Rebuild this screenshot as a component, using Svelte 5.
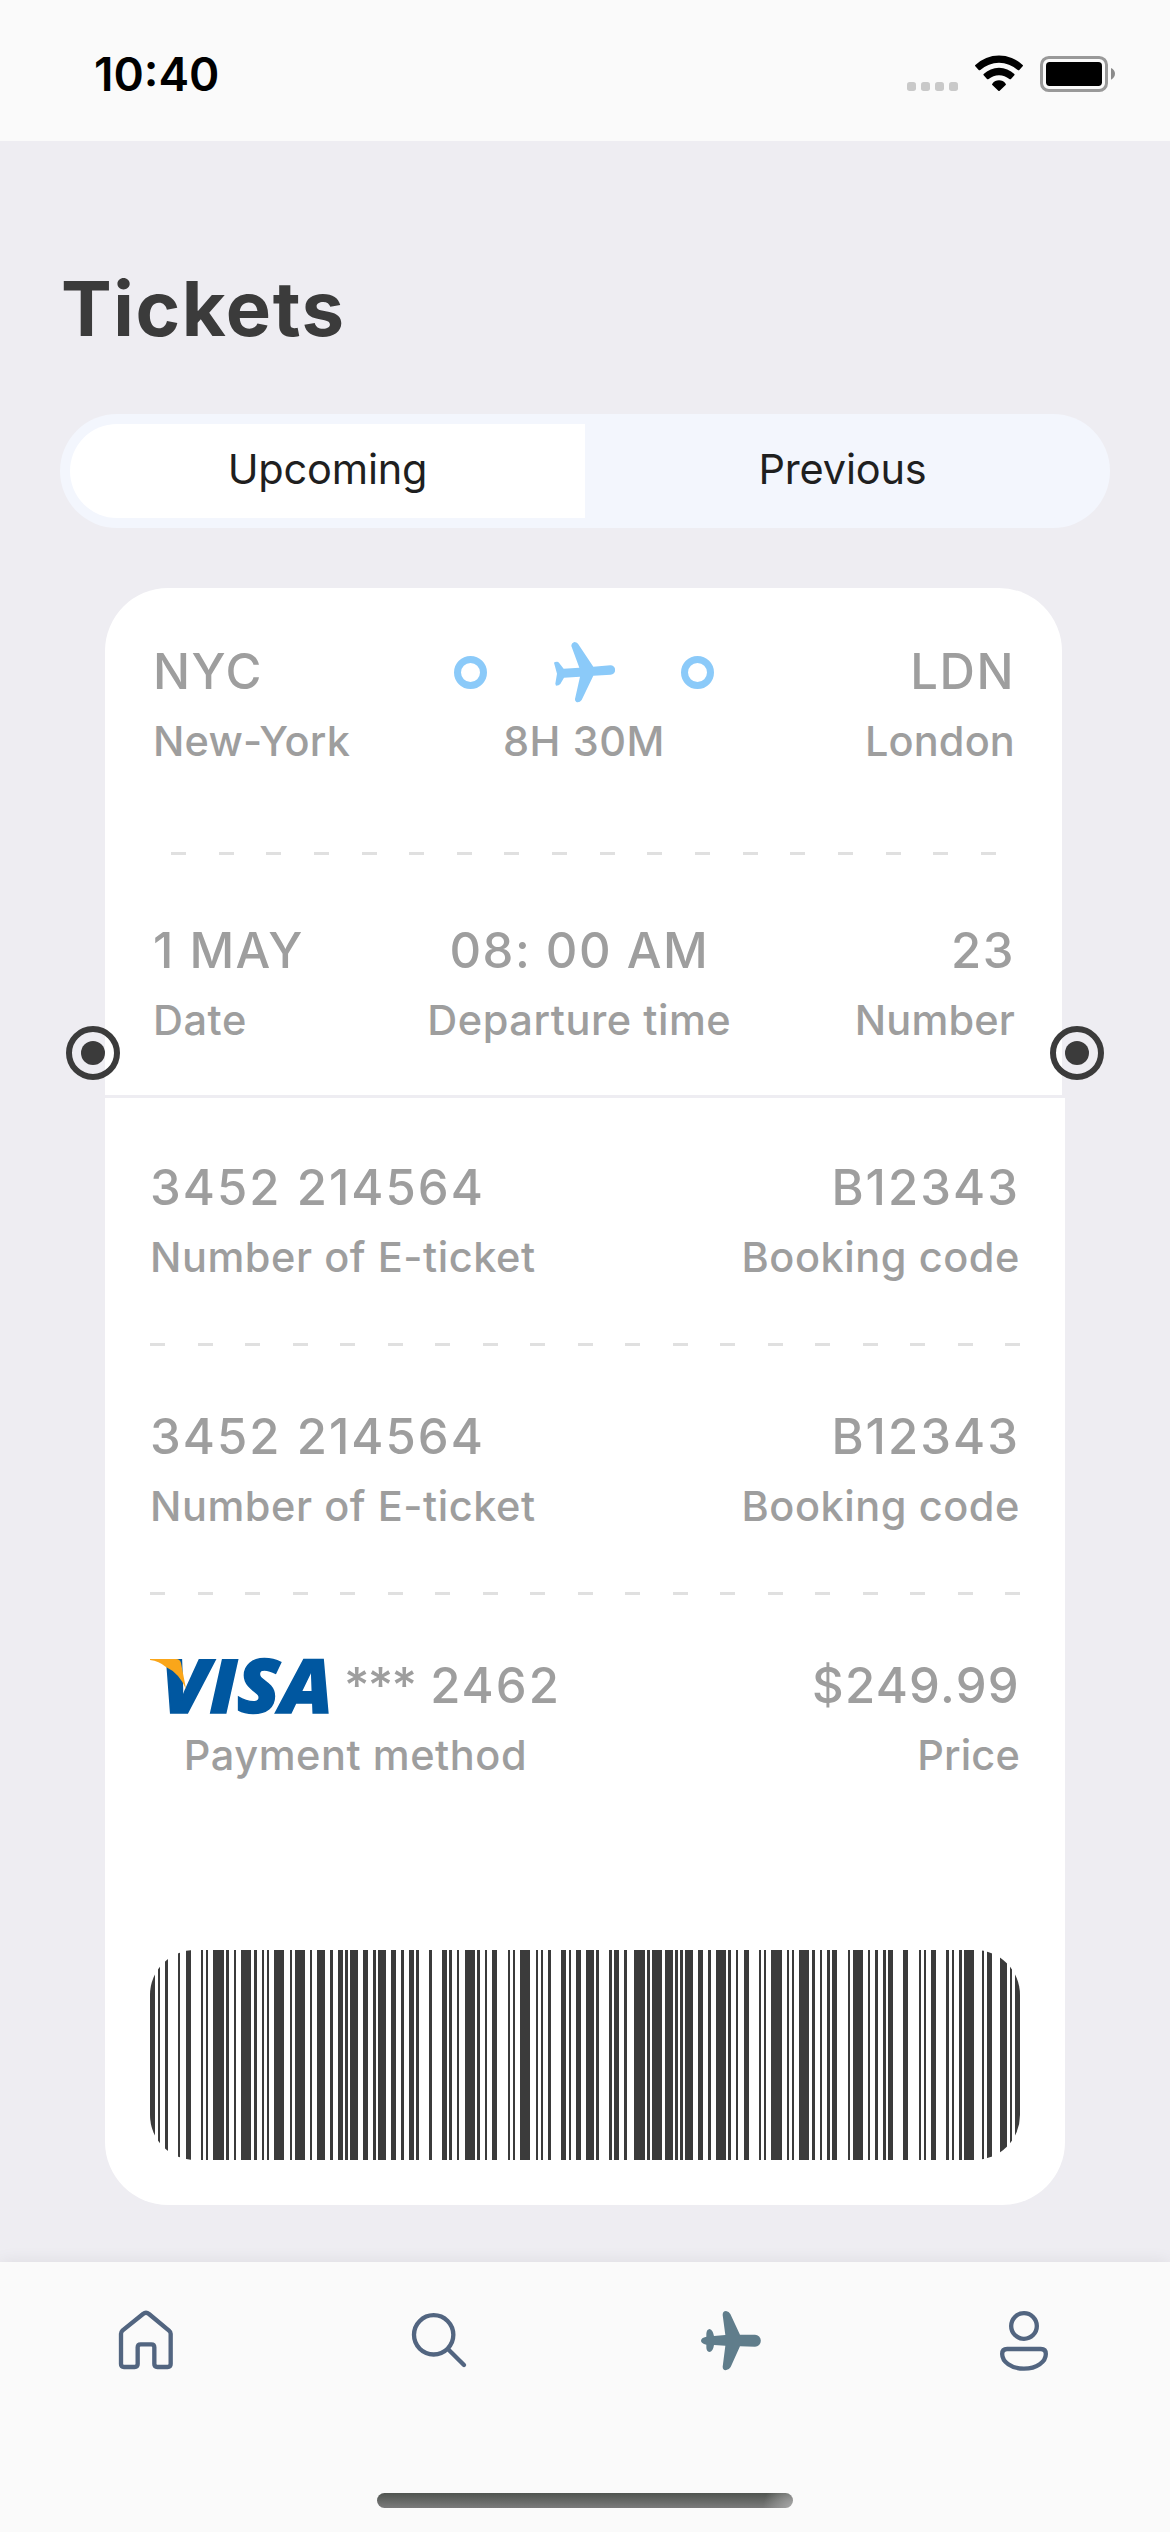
<script>
  let tab = $state('Upcoming');
  const tabs = ['Upcoming', 'Previous'];

  const tickets = [
    { number: '3452 214564', code: 'B12343' },
    { number: '3452 214564', code: 'B12343' }
  ];

  // [start, end] of every barcode stripe
  const bars = [
    [0,5],[8,10],[15,18],[28,30],[36,41],[51,53],[56,58],[63,74],[76,79],[84,86],[91,101],[104,107],
    [112,114],[117,119],[124,134],[140,142],[145,155],[160,162],[167,175],[180,183],[188,193],[195,198],
    [200,208],[213,218],[223,226],[228,236],[241,246],[251,254],[259,264],[266,269],[279,282],[292,297],
    [299,302],[307,309],[315,325],[327,330],[335,337],[342,347],[358,360],[363,365],[370,380],[386,388],
    [391,393],[398,401],[411,416],[419,421],[426,431],[436,444],[446,449],[459,462],[464,469],[474,477],
    [484,495],[497,500],[502,512],[515,523],[525,528],[530,533],[535,543],[548,553],[558,561],[566,576],
    [578,581],[586,588],[594,599],[609,611],[614,616],[621,632],[637,639],[642,644],[649,659],[662,665],
    [670,672],[677,680],[682,687],[698,700],[703,713],[718,720],[725,728],[733,736],[738,743],[753,758],
    [769,771],[774,776],[781,786],[796,799],[802,804],[809,812],[814,824],[832,834],[837,842],[850,857],
    [860,862],[865,870]
  ];
</script>

{#snippet dashes(count)}
  <div class="dashes">
    {#each Array(count) as _}<i></i>{/each}
  </div>
{/snippet}

<div class="screen">
  <header class="status">
    <span class="time">10:40</span>
    <div class="status-icons">
      <svg width="51" height="39" viewBox="81 72 153 117" fill="#c9c9c9">
        <rect x="81" y="156" width="27" height="27" rx="8" />
        <rect x="123" y="156" width="27" height="27" rx="8" />
        <rect x="165" y="156" width="27" height="27" rx="8" />
        <rect x="207" y="156" width="27" height="27" rx="8" />
      </svg>
      <svg width="48" height="39" viewBox="285 72 144 117">
        <path d="M286 105A103 103 0 0 1 428 105Q430 107 428 109L418 120Q416 122 413 120A84 84 0 0 0 301 120Q298 122 296 120L286 109Q284 107 286 105Z" />
        <path d="M311 132A66 66 0 0 1 403 132Q405 134 403 136L393 147Q391 149 388 147A48 48 0 0 0 326 147Q323 149 321 147L311 136Q309 134 311 132Z" />
        <path d="M337 161Q345 151 357 151Q369 151 377 161Q379 163 377 165L359 182Q357 184 355 182L337 165Q335 163 337 161Z" />
      </svg>
      <svg width="75" height="39" viewBox="480 72 225 117">
        <rect x="484.5" y="82.5" width="195" height="99" rx="22" fill="none" stroke="#999" stroke-width="9" />
        <rect x="498" y="96" width="168" height="72" rx="11" />
        <path d="M693 114Q705 120 705 131.500Q705 143 693 149Z" fill="#8b8b8b" />
      </svg>
    </div>
  </header>

  <main>
    <h1>Tickets</h1>

    <div class="tabs">
      {#each tabs as name}
        <button class:active={tab === name} onclick={() => (tab = name)}>{name}</button>
      {/each}
    </div>

    <div class="ticket">
      <section class="top">
        <div class="row route">
          <div class="cell">
            <b>NYC</b>
            <span class="tight">New-York</span>
          </div>
          <div class="cell mid">
            <div class="path">
              <i class="ring"></i>
              <svg width="62.667" height="62.667" viewBox="396 64 188 188" fill="#8bcaf9">
                <path d="M517 141L568 137A14 14 0 0 1 569 165L517 168L482 241Q475 250 466 247Q461 243 462 238L477 171L429 174L418 193Q414 198 405 198L403 192L408 162L399 129Q401 126 408 126Q412 126 414 129L428 147L475 144L451 79Q451 70 460 67Q467 67 471 72Z" />
              </svg>
              <i class="ring"></i>
            </div>
            <span>8H 30M</span>
          </div>
          <div class="cell end">
            <b>LDN</b>
            <span class="tight">London</span>
          </div>
        </div>
        {@render dashes(18)}
        <div class="row">
          <div class="cell">
            <b>1 MAY</b>
            <span>Date</span>
          </div>
          <div class="cell mid">
            <b>08: 00 AM</b>
            <span>Departure time</span>
          </div>
          <div class="cell end">
            <b>23</b>
            <span class="tight">Number</span>
          </div>
        </div>
        {#each ['left', 'right'] as side}
          <svg class="notch {side}" width="54" height="54" viewBox="0 0 54 54">
            <circle cx="27" cy="27" r="24" fill="none" stroke="#3b3b3b" stroke-width="6" />
            <circle cx="27" cy="27" r="12" fill="#3b3b3b" />
          </svg>
        {/each}
      </section>

      <section class="bottom">
        {#each tickets as t}
          <div class="row">
            <div class="cell">
              <b class="wide">{t.number}</b>
              <span>Number of E-ticket</span>
            </div>
            <div class="cell end">
              <b class="wide">{t.code}</b>
              <span>Booking code</span>
            </div>
          </div>
          {@render dashes(19)}
        {/each}
        <div class="row">
          <div class="cell mid">
            <div class="card-number">
              <svg class="visa" width="182" height="60" viewBox="0 0 182 60">
                <text x="11" y="56.5" textLength="172" lengthAdjust="spacingAndGlyphs">VISA</text>
                <path d="M0 3H26Q30 3 31 7L36 33Q29 17 16 11Q9 5 0 4Z" />
              </svg>
              <b class="stars">***</b>
              <b class="wide">2462</b>
            </div>
            <span>Payment method</span>
          </div>
          <div class="cell end">
            <b class="price">$249.99</b>
            <span class="tight">Price</span>
          </div>
        </div>
        <svg class="barcode" width="870" height="210" viewBox="0 0 870 210" shape-rendering="crispEdges">
          {#each bars as [a, z]}
            <rect x={a} y="0" width={z - a} height="210" fill="#3b3b3b" />
          {/each}
        </svg>
      </section>
    </div>
  </main>

  <nav>
    <div class="items">
      <svg width="66" height="66" viewBox="40 51 198 198">
        <path d="M64 131Q64 126 68 122L130 72Q139 65 148 72L208 122Q213 126 213 131V222Q213 231 204 231H173Q164 231 164 222V172Q164 163 155 163H123Q114 163 114 172V222Q114 231 105 231H73Q64 231 64 222Z" />
      </svg>
      <svg width="66" height="66" viewBox="915 51 198 198">
        <circle cx="998" cy="134.500" r="59" />
        <path d="M1043 179L1089 225" />
      </svg>
      <svg class="solid" width="66" height="66" viewBox="25 51 198 198">
        <path d="M151 134L196 134A17.500 18 0 0 1 196 170L151 169L123 231Q118 240 108 241Q99 240 99 230L107 167L73 165Q70 185 59 186Q50 184 50 172V164Q34 160 34 152Q34 143 50 140V131Q51 118 60 117Q69 119 73 138L107 135L99 75Q99 63 109 63Q118 64 122 72Z" />
      </svg>
      <svg width="66" height="66" viewBox="902.500 51 198 198">
        <circle cx="1001.500" cy="108" r="38.500" />
        <path d="M951 177H1052Q1067 177 1067 192C1067 215 1040 236 1001.500 236C963 236 936 215 936 192Q936 177 951 177Z" />
      </svg>
    </div>
    <div class="home-bar"></div>
  </nav>
</div>

<style>
  :global(body) {
    margin: 0;
    background: #eeedf2;
  }
  .screen {
    width: 1170px;
    height: 2532px;
    display: flex;
    flex-direction: column;
    overflow: hidden;
    background: #eeedf2;
    font-family: Inter, 'Liberation Sans', sans-serif;
  }
  svg {
    display: block;
    flex: none;
  }
  .status {
    box-sizing: border-box;
    height: 141px;
    padding: 0 55px 0 94px;
    display: flex;
    justify-content: space-between;
    background: #fafafa;
  }
  .time {
    margin-top: 44px;
    line-height: 60px;
    height: 60px;
    font-size: 46px;
    font-weight: 600;
    color: #000;
  }
  .status-icons {
    display: flex;
    gap: 17px;
    padding-top: 54px;
  }
  main {
    flex: 1;
  }
  h1 {
    margin: 117px 0 0 61px;
    font-size: 76px;
    line-height: 100px;
    height: 100px;
    font-weight: 700;
    letter-spacing: 1.6px;
    color: #3b3b3b;
  }
  .tabs {
    box-sizing: border-box;
    margin: 56px 60px 0;
    height: 114px;
    padding: 10px;
    display: flex;
    border-radius: 57px;
    background: #f3f6fd;
  }
  button {
    flex: 1;
    border: 0;
    padding: 0 0 4px;
    background: #f3f6fd;
    font: 400 41.500px/50px Inter, 'Liberation Sans', sans-serif;
    letter-spacing: -0.2px;
    color: #1f1f1f;
  }
  button:first-child {
    border-radius: 47px 0 0 47px;
  }
  button:last-child {
    border-radius: 0 47px 47px 0;
  }
  button.active {
    background: #fff;
  }
  .ticket {
    margin: 60px 105px 0;
    display: flex;
    flex-direction: column;
    gap: 3px;
  }
  section {
    box-sizing: border-box;
    background: #fff;
  }
  .top {
    position: relative;
    width: 957px;
    height: 507px;
    padding: 54px 47px 0 48px;
    border-radius: 63px 63px 0 0;
  }
  .bottom {
    width: 960px;
    height: 1107px;
    padding: 60px 45px 0;
    border-radius: 0 0 63px 63px;
  }
  .row {
    display: flex;
    justify-content: space-between;
  }
  .route {
    display: grid;
    grid-template-columns: 1fr 260px 1fr;
  }
  .cell {
    display: flex;
    flex-direction: column;
    gap: 14px;
    color: #9e9e9e;
    white-space: pre;
  }
  .mid {
    align-items: center;
  }
  .end {
    align-items: flex-end;
  }
  .cell b {
    font-size: 49px;
    line-height: 60px;
    height: 60px;
    font-weight: 500;
    letter-spacing: 1.5px;
  }
  .cell span {
    font-size: 41.500px;
    line-height: 50px;
    height: 50px;
    font-weight: 500;
    letter-spacing: 0.55px;
  }
  .cell .tight {
    letter-spacing: 0.15px;
  }
  .cell .wide {
    letter-spacing: 2.050px;
  }
  .cell .price {
    letter-spacing: 1.3px;
  }
  .path {
    align-self: stretch;
    display: flex;
    align-items: center;
    justify-content: space-between;
    height: 60px;
  }
  .ring {
    box-sizing: border-box;
    width: 33px;
    height: 33px;
    border: 7.500px solid #8bcaf9;
    border-radius: 50%;
  }
  .dashes {
    display: flex;
    justify-content: space-between;
    height: 3px;
  }
  .dashes i {
    width: 15px;
    background: #e0e0e0;
  }
  .top .dashes {
    margin: 86px 19px 66px 18px;
  }
  .bottom .dashes {
    margin: 61px 0;
  }
  .notch {
    position: absolute;
    top: 438px;
  }
  .left {
    left: -39px;
  }
  .right {
    right: -42px;
  }
  .card-number {
    display: flex;
  }
  .cell .stars {
    margin: 0 15px 0 12px;
    letter-spacing: -1.800px;
  }
  .visa {
    overflow: visible;
  }
  .visa text {
    font: italic 800 74px 'Open Sans', sans-serif;
    fill: #0057a0;
    stroke: #0057a0;
    stroke-width: 1.500px;
  }
  .visa path {
    fill: #faa61a;
  }
  .barcode {
    margin-top: 170px;
    border-radius: 45px;
  }
  nav {
    position: relative;
    height: 270px;
    display: flex;
    flex-direction: column;
    align-items: center;
    background: #fafafa;
    box-shadow: 0 0 16px rgba(0, 0, 0, 0.08);
  }
  .items {
    width: 100%;
    display: grid;
    grid-template-columns: repeat(4, 1fr);
    justify-items: center;
    padding-top: 45px;
  }
  .items svg {
    fill: none;
    stroke: #526580;
    stroke-width: 13;
    stroke-linecap: round;
    stroke-linejoin: round;
  }
  .items .solid {
    fill: #607d8b;
    stroke: none;
  }
  .home-bar {
    margin-top: 120px;
    width: 416px;
    height: 15px;
    border-radius: 8px;
    background: radial-gradient(circle at 100% 100%, #a8a8a8, transparent 30px), linear-gradient(#505450, #7b7b7b);
  }
</style>
